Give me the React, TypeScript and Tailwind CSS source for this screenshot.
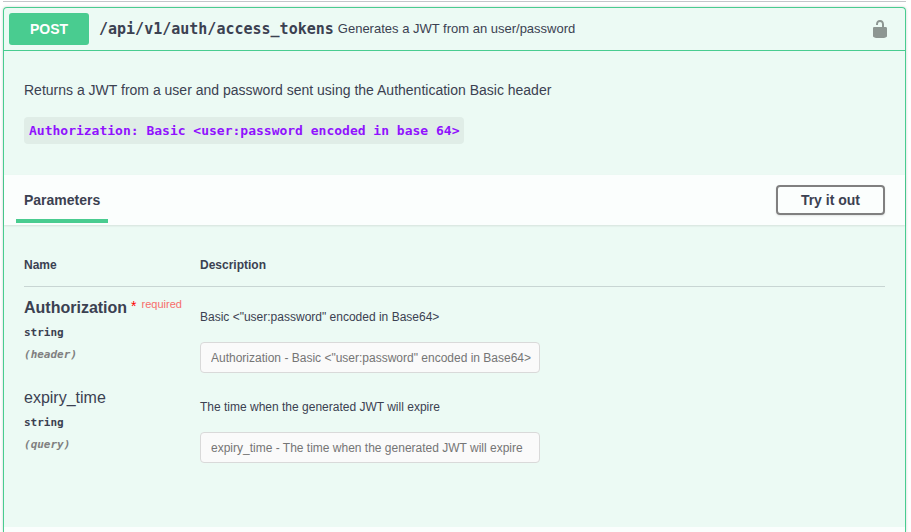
type Param = {
  name: string
  type: string
  location: string
  required: boolean
  description: string
}

const params: Param[] = [
  {
    name: "Authorization",
    type: "string",
    location: "header",
    required: true,
    description: 'Basic <"user:password" encoded in Base64>',
  },
  {
    name: "expiry_time",
    type: "string",
    location: "query",
    required: false,
    description: "The time when the generated JWT will expire",
  },
]

function UnlockedIcon() {
  return (
    <svg viewBox="0 0 20 20" className="size-5" fill="currentColor" aria-hidden="true">
      <path d="M15.8 8H14V5.6C14 2.703 12.665 1 10 1 7.334 1 6 2.703 6 5.6V6h2v-.801C8 3.754 8.797 3 10 3c1.203 0 2 .754 2 2.199V8H4c-.553 0-1 .646-1 1.199V17c0 .549.428 1.139.951 1.307l1.197.387C5.672 18.861 6.55 19 7.1 19h5.8c.549 0 1.428-.139 1.951-.307l1.196-.387c.524-.167.953-.757.953-1.306V9.199C17 8.646 16.352 8 15.8 8z" />
    </svg>
  )
}

function ParamRow({ param }: { param: Param }) {
  return (
    <tr className="align-top">
      <td className="pt-[11px]">
        <label
          htmlFor={param.name}
          className={param.required ? "flex text-base leading-5 font-bold" : "flex text-base leading-5"}
        >
          {param.name}
          {param.required && (
            <span className="ml-1 flex gap-[5px] text-[11px] leading-3 font-normal text-[#ff0000]/60">
              <span className="text-sm leading-4 text-[#ff0000]">*</span>
              required
            </span>
          )}
        </label>
        <div className="mt-1 font-['DejaVu_Sans_Mono',monospace] text-[11px] leading-[22px] font-bold">
          {param.type}
        </div>
        <div className="font-['DejaVu_Sans_Mono',monospace] text-[11px] leading-[22px] font-bold text-[#808080] italic">
          ({param.location})
        </div>
      </td>
      <td className="pt-[21px] pb-1 text-xs">
        <p className="leading-[18px]">{param.description}</p>
        <input
          id={param.name}
          type="text"
          placeholder={`${param.name} - ${param.description}`}
          className="mt-4 block h-[31px] w-full max-w-[340px] rounded border border-[#d9d9d9] bg-[#fafafa] pr-1 pl-[10px] placeholder:text-[#757575]"
        />
      </td>
    </tr>
  )
}

export default function App() {
  return (
    <main className="flex min-h-screen flex-col bg-white pt-px pr-[5px] pl-[3px] font-['Liberation_Sans',Arial,sans-serif] text-[#3b4151]">
      <div className="mb-[5px] border-t border-[#c4c6ca]" />
      <section className="flex flex-1 flex-col rounded-t border border-b-0 border-[#49cc90] bg-[#49cc90]/10 shadow-[0_0_3px_rgba(0,0,0,0.19)]">
        <header className="flex items-center border-b border-[#49cc90] p-[5px]">
          <span className="w-20 rounded-[3px] bg-[#49cc90] text-center text-sm leading-8 font-bold text-white">
            POST
          </span>
          <span className="ml-[10px] font-['DejaVu_Sans_Mono',monospace] text-[15px] font-bold">
            /api/v1/auth/access_tokens
          </span>
          <span className="ml-1 flex-1 text-[13px]">Generates a JWT from an user/password</span>
          <button type="button" aria-label="Authorize" className="mr-[10px] text-black/40">
            <UnlockedIcon />
          </button>
        </header>

        <div className="px-5 pt-7 pb-[31px]">
          <p className="text-sm leading-[22px]">
            Returns a JWT from a user and password sent using the Authentication Basic header
          </p>
          <code className="mt-4 block w-fit rounded bg-black/5 px-[5px] font-['DejaVu_Sans_Mono',monospace] text-[13px] leading-[27px] font-bold text-[#9012fe]">
            {"Authorization: Basic <user:password encoded in base 64>"}
          </code>
        </div>

        <div className="flex h-[50px] items-center justify-between bg-white/80 pr-5 pl-3 shadow-[0_1px_2px_rgba(0,0,0,0.1)]">
          <h4 className="self-end mb-[2px] border-b-4 border-[#49cc90] px-2 pb-[9px] text-sm leading-5 font-bold">
            Parameters
          </h4>
          <button
            type="button"
            className="h-[30px] rounded border-2 border-[#808080] px-[23px] text-sm font-bold shadow-[0_1px_2px_rgba(0,0,0,0.1)]"
          >
            Try it out
          </button>
        </div>

        <div className="px-5 pt-[31px] pb-[60px]">
          <table className="w-full border-collapse">
            <thead>
              <tr className="border-b border-[#3b4151]/20 text-left text-xs leading-[18px]">
                <th className="w-44 pb-3 font-bold">Name</th>
                <th className="pb-3 font-bold">Description</th>
              </tr>
            </thead>
            <tbody>
              {params.map((param) => (
                <ParamRow key={param.name} param={param} />
              ))}
            </tbody>
          </table>
        </div>

        <div className="flex-1 bg-white/80" />
      </section>
    </main>
  )
}
